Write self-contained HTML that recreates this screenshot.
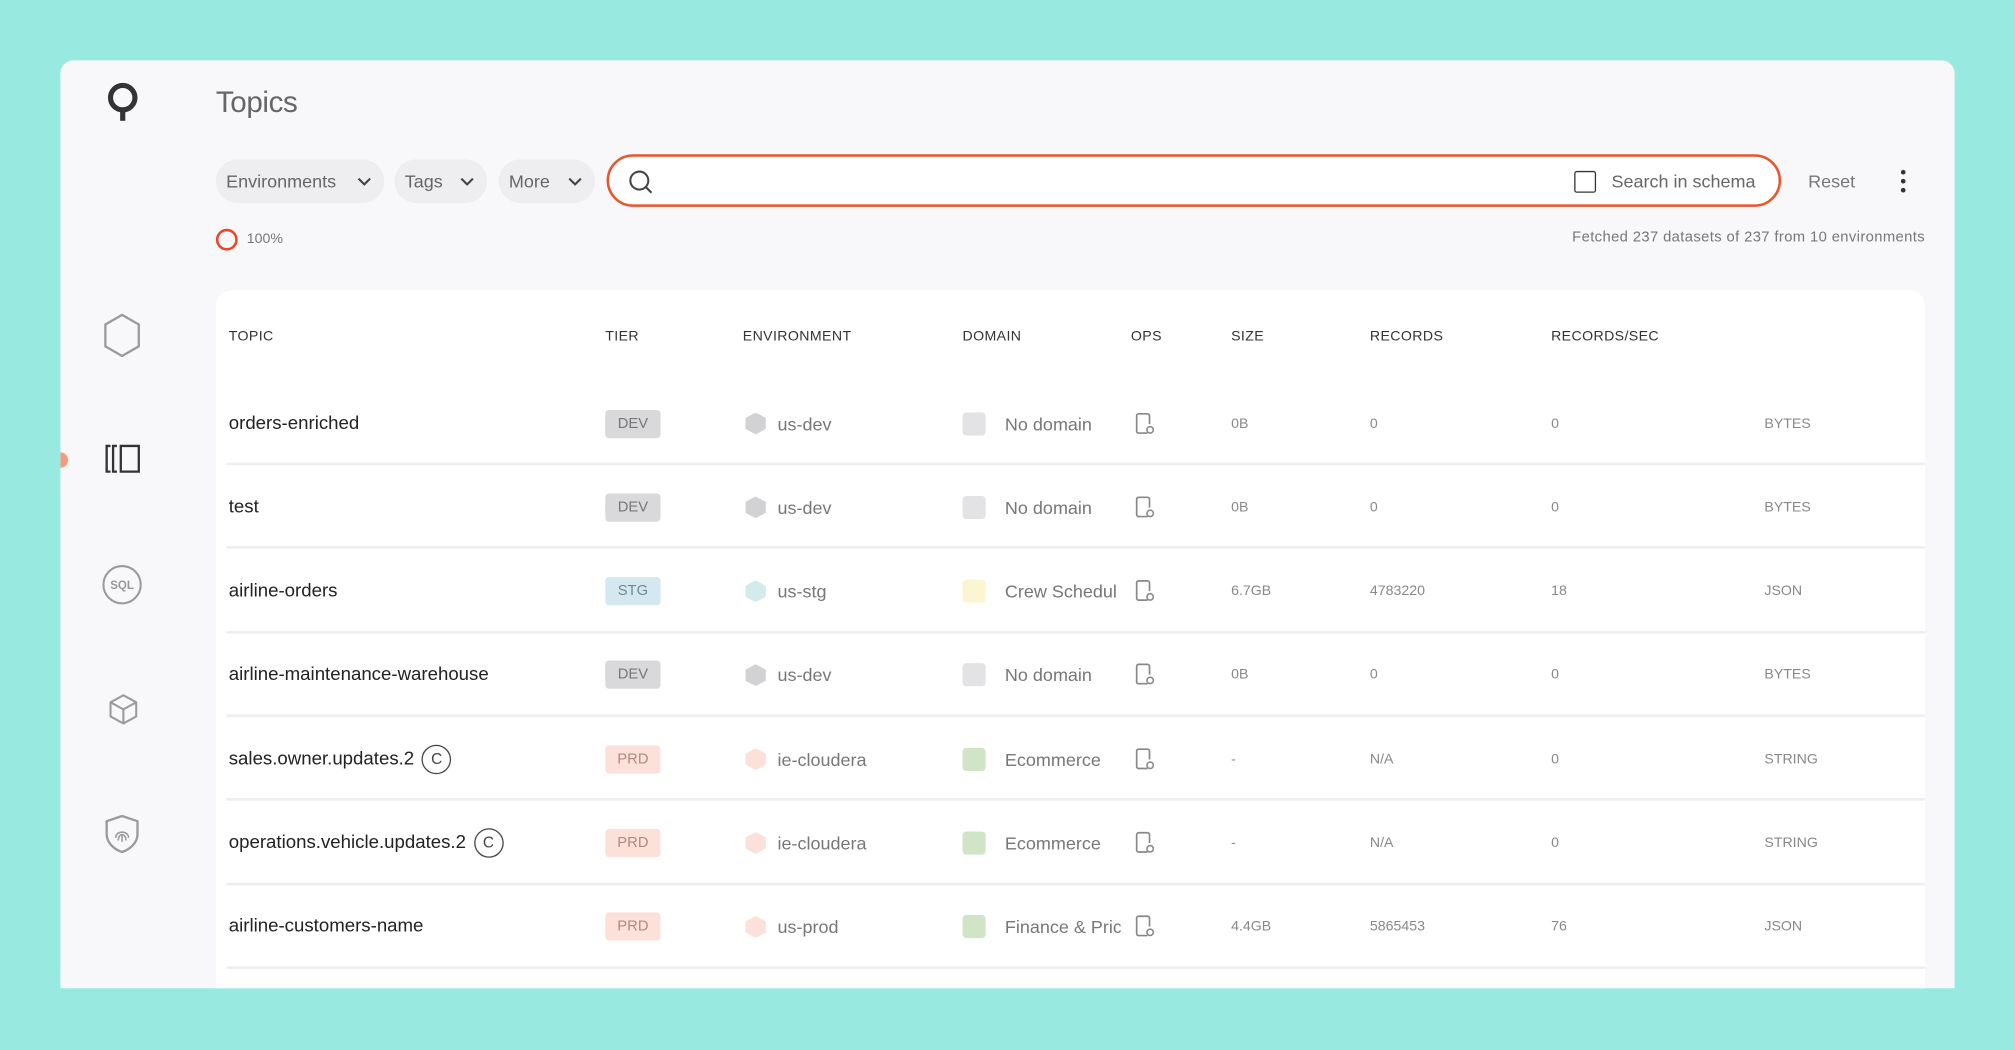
<!DOCTYPE html>
<html><head><meta charset="utf-8">
<style>
*{margin:0;padding:0;box-sizing:border-box}
html,body{width:2015px;height:1050px;overflow:hidden;background:#98e9e0;font-family:"Liberation Sans",sans-serif}
#w{position:absolute;left:0;top:0;width:1568px;height:817px;transform:scale(1.28508);transform-origin:0 0;background:#98e9e0}
.card{position:absolute;left:47px;top:47px;width:1474px;height:722px;background:#f8f7f9;border-radius:10px 10px 0 0;overflow:hidden}
.a{position:absolute}
.title{left:121px;top:19px;font-size:23px;color:#666;letter-spacing:-0.3px}
.pill{top:77px;height:34px;border-radius:17px;background:#eeedf0;color:#666;font-size:14px;line-height:34px;padding-left:8px}
.pill svg{position:absolute;right:10px;top:14px}
.search{left:425px;top:73px;width:914px;height:41px;border:2px solid #e8562e;border-radius:21px;background:#fff}
.tbl{left:121px;top:179px;width:1330px;height:560px;background:#fff;border-radius:12px}
.hd{top:30px;font-size:11px;color:#333;letter-spacing:0.3px}
.row{position:absolute;left:0;width:1330px;height:65px}
.row .sep{position:absolute;left:8px;right:0;bottom:0;height:2px;background:#eeeef1;border-radius:2px}
.c{position:absolute;top:50%;transform:translateY(-50%);white-space:nowrap}
.t{font-size:14.5px;color:#222}
.badge{width:43px;height:22px;border-radius:3px;font-size:11.5px;text-align:center;line-height:22px}
.g{font-size:14px;color:#777}
.n{font-size:11px;color:#888}
.hex{width:16px;height:17px;clip-path:polygon(50% 0,100% 25%,100% 75%,50% 100%,0 75%,0 25%);border-radius:4px}
.sq{width:18px;height:18px;border-radius:3px}
.cc{display:inline-block;width:23px;height:23px;border:1.3px solid #444;border-radius:50%;text-align:center;line-height:21px;font-size:12px;color:#444;margin-left:6px;vertical-align:middle}
</style></head><body><div id="w">
<div class="card">
 <svg class="a" style="left:36px;top:17px" width="26" height="32" viewBox="0 0 26 32"><circle cx="12.5" cy="12" r="9.5" fill="none" stroke="#333" stroke-width="4"/><rect x="10.5" y="20" width="4" height="10" fill="#333"/></svg>
 <svg class="a" style="left:32px;top:196px" width="32" height="36" viewBox="0 0 32 36"><path d="M16 2 L29 9.5 V26.5 L16 34 L3 26.5 V9.5 Z" fill="none" stroke="#9a9a9a" stroke-width="1.8" stroke-linejoin="round"/></svg>
 <div class="a" style="left:0;top:305px;width:6px;height:12px;background:#f59a7c;border-radius:0 6px 6px 0"></div>
 <svg class="a" style="left:34px;top:298px" width="30" height="24" viewBox="0 0 30 24"><path d="M5 2H2V22H5M10 2H7V22H10M13 2H27V22H13Z" fill="none" stroke="#333" stroke-width="1.8"/></svg>
 <svg class="a" style="left:32px;top:392px" width="32" height="32" viewBox="0 0 32 32"><circle cx="16" cy="16" r="14.5" fill="none" stroke="#9a9a9a" stroke-width="1.6"/><text x="16" y="19.5" font-size="9" font-weight="bold" fill="#9a9a9a" text-anchor="middle" font-family="Liberation Sans">SQL</text></svg>
 <svg class="a" style="left:36px;top:492px" width="26" height="26" viewBox="0 0 26 26"><path d="M13 2L23 7.5V18.5L13 24L3 18.5V7.5Z M3 7.5L13 13L23 7.5 M13 13V24" fill="none" stroke="#9a9a9a" stroke-width="1.6" stroke-linejoin="round"/></svg>
 <svg class="a" style="left:34px;top:586px" width="28" height="32" viewBox="0 0 28 32"><path d="M14 2L26 6V16C26 23 20 28 14 30C8 28 2 23 2 16V6Z" fill="none" stroke="#9a9a9a" stroke-width="1.8" stroke-linejoin="round"/><path d="M9 19C9 13 19 13 19 19M11 21C11 15 17 15 17 21M14 17V22" fill="none" stroke="#9a9a9a" stroke-width="1.2"/></svg>

 <div class="a title">Topics</div>
 <div class="a pill" style="left:121px;width:131px">Environments<svg width="11" height="7" viewBox="0 0 11 7"><path d="M1 1L5.5 5.5L10 1" fill="none" stroke="#444" stroke-width="1.6"/></svg></div>
 <div class="a pill" style="left:260px;width:72px">Tags<svg width="11" height="7" viewBox="0 0 11 7"><path d="M1 1L5.5 5.5L10 1" fill="none" stroke="#444" stroke-width="1.6"/></svg></div>
 <div class="a pill" style="left:341px;width:75px">More<svg width="11" height="7" viewBox="0 0 11 7"><path d="M1 1L5.5 5.5L10 1" fill="none" stroke="#444" stroke-width="1.6"/></svg></div>
 <div class="a search">
  <svg class="a" style="left:15px;top:10px" width="20" height="20" viewBox="0 0 20 20"><circle cx="8.5" cy="8.5" r="7" fill="none" stroke="#444" stroke-width="1.6"/><path d="M13.5 13.5L18 18" stroke="#444" stroke-width="1.6"/></svg>
  <div class="a" style="left:751px;top:11px;width:17px;height:17px;border:1.8px solid #333;border-radius:2px"></div>
  <div class="a" style="left:780px;top:11px;font-size:14px;color:#666">Search in schema</div>
 </div>
 <div class="a" style="left:1360px;top:86px;font-size:14px;color:#777">Reset</div>
 <svg class="a" style="left:1430px;top:84px" width="8" height="20" viewBox="0 0 8 20"><circle cx="4" cy="3" r="1.8" fill="#333"/><circle cx="4" cy="10" r="1.8" fill="#333"/><circle cx="4" cy="17" r="1.8" fill="#333"/></svg>
 <div class="a" style="left:121px;top:131px;width:17px;height:17px;border:2px solid #e8482a;border-radius:50%"></div>
 <div class="a" style="left:145px;top:133px;font-size:11px;color:#777">100%</div>
 <div class="a" style="right:23px;top:132px;font-size:11.5px;color:#777;letter-spacing:0.3px">Fetched 237 datasets of 237 from 10 environments</div>

 <div class="a tbl">
  <div class="a hd" style="left:10px">TOPIC</div>
  <div class="a hd" style="left:303px">TIER</div>
  <div class="a hd" style="left:410px">ENVIRONMENT</div>
  <div class="a hd" style="left:581px">DOMAIN</div>
  <div class="a hd" style="left:712px">OPS</div>
  <div class="a hd" style="left:790px">SIZE</div>
  <div class="a hd" style="left:898px">RECORDS</div>
  <div class="a hd" style="left:1039px">RECORDS/SEC</div>
 </div>
</div>
<script>
var rows=[
["orders-enriched","",'DEV',"us-dev","No domain","0B","0","0","BYTES"],
["test","",'DEV',"us-dev","No domain","0B","0","0","BYTES"],
["airline-orders","",'STG',"us-stg","Crew Schedul","6.7GB","4783220","18","JSON"],
["airline-maintenance-warehouse","",'DEV',"us-dev","No domain","0B","0","0","BYTES"],
["sales.owner.updates.2","c",'PRD',"ie-cloudera","Ecommerce","-","N/A","0","STRING"],
["operations.vehicle.updates.2","c",'PRD',"ie-cloudera","Ecommerce","-","N/A","0","STRING"],
["airline-customers-name","",'PRD',"us-prod","Finance &amp; Pric","4.4GB","5865453","76","JSON"]];
var tierC={DEV:["#d9d9dc","#777"],STG:["#d4e9ef","#6a8a94"],PRD:["#fbe1da","#b08a80"]};
var envC={"us-dev":"#d2d2d5","us-stg":"#d3eaee","ie-cloudera":"#fbe1da","us-prod":"#fbe1da"};
var domC={"No domain":"#e3e3e6","Crew Schedul":"#fbf5d2","Ecommerce":"#cfe5c6","Finance &amp; Pric":"#cfe5c6"};
var tbl=document.querySelector('.tbl'),h='';
rows.forEach(function(r,i){
 var y=71+i*65.3;
 h+='<div class="row" style="top:'+y+'px">'+
 '<div class="c t" style="left:10px">'+r[0]+(r[1]?'<span class="cc">C</span>':'')+'</div>'+
 '<div class="c badge" style="left:303px;background:'+tierC[r[2]][0]+';color:'+tierC[r[2]][1]+'">'+r[2]+'</div>'+
 '<div class="c hex" style="left:412px;background:'+envC[r[3]]+'"></div>'+
 '<div class="c g" style="left:437px">'+r[3]+'</div>'+
 '<div class="c sq" style="left:581px;background:'+domC[r[4]]+'"></div>'+
 '<div class="c g" style="left:614px;width:90px;overflow:hidden">'+r[4]+'</div>'+
 '<svg class="c" style="left:715px" width="16" height="18" viewBox="0 0 16 18"><path d="M10 16H3a1.5 1.5 0 0 1-1.5-1.5V2.5A1.5 1.5 0 0 1 3 1h7a1.5 1.5 0 0 1 1.5 1.5V9" fill="none" stroke="#888" stroke-width="1.3"/><circle cx="12" cy="13.5" r="2.5" fill="none" stroke="#888" stroke-width="1.2"/></svg>'+
 '<div class="c n" style="left:790px">'+r[5]+'</div>'+
 '<div class="c n" style="left:898px">'+r[6]+'</div>'+
 '<div class="c n" style="left:1039px">'+r[7]+'</div>'+
 '<div class="c n" style="left:1205px">'+r[8]+'</div>'+
 '<div class="sep"></div></div>';
});
tbl.insertAdjacentHTML('beforeend',h);
</script>
</div></body></html>
